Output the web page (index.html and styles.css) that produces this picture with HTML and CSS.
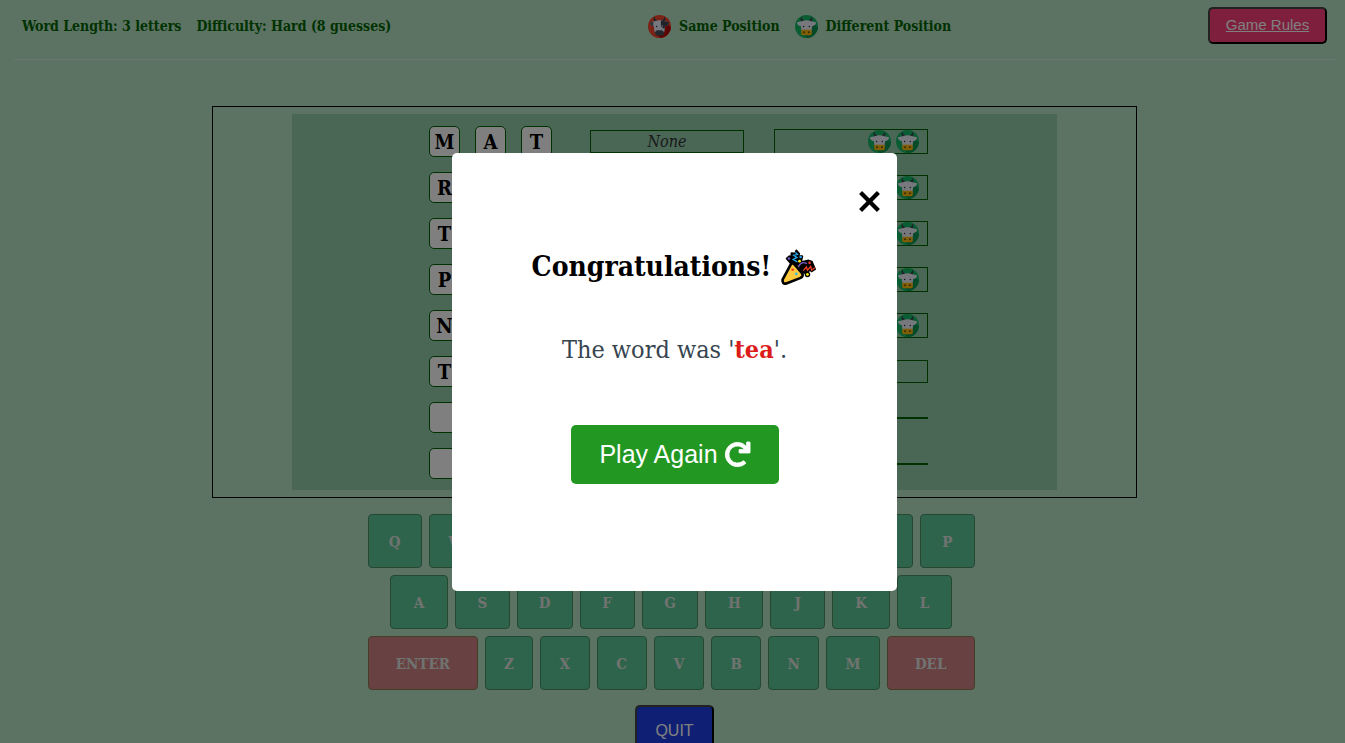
FILE: index.html
```
<!DOCTYPE html>
<html lang="en">
<head>
<meta charset="utf-8">
<meta name="viewport" content="width=device-width, initial-scale=1">
<title>Word Game</title>
<link rel="stylesheet" href="styles.css">
</head>
<body>
<svg class="defs" aria-hidden="true">
  <symbol id="head" viewBox="0 0 24 24">
    <path d="M7.500 8Q4.800 5 6.500 1.500Q7 4.500 10 6zM16.500 8Q19.200 5 17.500 1.500Q17 4.500 14 6z" fill="#3d4550"/>
    <path d="M7 6.500Q12 4.500 17 6.500L22 7.500Q21.500 11.500 18 11.500L17 18H7L6 11.500Q2.500 11.500 2 7.500z" fill="#eef0fa"/>
  </symbol>
  <symbol id="cow" viewBox="0 0 24 24">
    <circle cx="12" cy="12" r="12" fill="#14b866"/>
    <path d="M17 7L24 13A12 12 0 0 1 13 24L8 19z" fill="#0d9454"/>
    <use href="#head"/>
    <rect x="6.500" y="15.500" width="11" height="5.500" rx="1.500" fill="#ffbd0a"/>
    <circle cx="9.500" cy="18" r="1" fill="#6b5200"/><circle cx="14.500" cy="18" r="1" fill="#6b5200"/>
    <circle cx="9" cy="12" r=".8" fill="#333"/><circle cx="15" cy="12" r=".8" fill="#333"/>
  </symbol>
  <symbol id="bull" viewBox="0 0 24 24">
    <circle cx="12" cy="12" r="12" fill="#f5472f"/>
    <path d="M19 7L24 13A12 12 0 0 1 13 24L8 19z" fill="#b80b0b"/>
    <use href="#head"/>
    <path d="M13.500 5.700L17 6.500L22 7.500Q21.500 11.500 18 11.500L17 14.500L13.500 12z" fill="#3d4652"/>
    <path d="M2 7.500L5.500 7V11.500Q2.500 11.500 2 7.500z" fill="#5b6470"/>
    <rect x="7.500" y="16" width="9" height="5.500" rx="2.700" fill="#46505c"/>
    <circle cx="9" cy="12" r=".8" fill="#333"/><circle cx="15" cy="11.500" r=".8" fill="#eee"/>
  </symbol>
</svg>

<div class="page">
  <header class="topbar">
    <div class="group"><span>Word Length: 3 letters</span><span>Difficulty: Hard (8 guesses)</span></div>
    <div class="group">
      <span class="legend"><svg class="badge"><use href="#bull"/></svg>Same Position</span>
      <span class="legend"><svg class="badge"><use href="#cow"/></svg>Different Position</span>
    </div>
    <button class="rules" type="button">Game Rules</button>
  </header>

  <main>
    <section class="board">
      <div class="guesses">
        <div class="guess"><div class="tiles"><span class="tile">M</span><span class="tile">A</span><span class="tile">T</span></div><div class="hint none">None</div><div class="hint"><svg class="badge"><use href="#cow"/></svg><svg class="badge"><use href="#cow"/></svg></div></div>
        <div class="guess"><div class="tiles"><span class="tile">R</span><span class="tile"></span><span class="tile"></span></div><div class="hint none"></div><div class="hint"><svg class="badge"><use href="#cow"/></svg></div></div>
        <div class="guess"><div class="tiles"><span class="tile">T</span><span class="tile"></span><span class="tile"></span></div><div class="hint none"></div><div class="hint"><svg class="badge"><use href="#cow"/></svg></div></div>
        <div class="guess"><div class="tiles"><span class="tile">P</span><span class="tile"></span><span class="tile"></span></div><div class="hint none"></div><div class="hint"><svg class="badge"><use href="#cow"/></svg></div></div>
        <div class="guess"><div class="tiles"><span class="tile">N</span><span class="tile"></span><span class="tile"></span></div><div class="hint none"></div><div class="hint"><svg class="badge"><use href="#cow"/></svg></div></div>
        <div class="guess"><div class="tiles"><span class="tile">T</span><span class="tile">E</span><span class="tile">A</span></div><div class="hint"></div><div class="hint none">None</div></div>
        <div class="guess"><div class="tiles"><span class="tile"></span><span class="tile"></span><span class="tile"></span></div><div class="hint empty"></div><div class="hint empty"></div></div>
        <div class="guess"><div class="tiles"><span class="tile"></span><span class="tile"></span><span class="tile"></span></div><div class="hint empty"></div><div class="hint empty"></div></div>
      </div>
    </section>

    <section class="keyboard" aria-label="Keyboard">
      <div class="keys keys-top"><button class="key">Q</button><button class="key">W</button><button class="key">E</button><button class="key">R</button><button class="key">T</button><button class="key">Y</button><button class="key">U</button><button class="key">I</button><button class="key">O</button><button class="key">P</button></div>
      <div class="keys keys-middle"><button class="key">A</button><button class="key">S</button><button class="key">D</button><button class="key">F</button><button class="key">G</button><button class="key">H</button><button class="key">J</button><button class="key">K</button><button class="key">L</button></div>
      <div class="keys keys-bottom"><button class="key action">ENTER</button><button class="key">Z</button><button class="key">X</button><button class="key">C</button><button class="key">V</button><button class="key">B</button><button class="key">N</button><button class="key">M</button><button class="key action">DEL</button></div>
    </section>
    <button class="quit" type="button">QUIT</button>
  </main>
</div>

<div class="overlay">
  <div class="modal" role="dialog" aria-modal="true" aria-labelledby="result">
    <button class="close" type="button" aria-label="Close"><svg viewBox="0 0 20 20"><path d="M1.500 1.500L18.500 18.500M18.500 1.500L1.500 18.500" stroke="#000" stroke-width="4"/></svg></button>
    <h1 class="title" id="result">Congratulations!
      <svg class="party" viewBox="0 0 34 34" aria-hidden="true">
        <g stroke="#000" stroke-linejoin="round" stroke-linecap="round">
          <path d="M9 13L5.500 9L8 7L10 8L10 4L13.500 4.500L14.500 1.500L17 4.500L16 7L20 7L19 11L15 15zM17 15L21 12L26 11L29 12L32 19L29 21L27 19L25 23L20 22z" fill="#000" stroke-width="2"/>
          <path d="M9.500 14Q11.500 12.500 14 16L20 23Q21.500 26 18 27.500L5 32.500Q1.200 33.500 1.500 29z" fill="#ffc83d" stroke-width="2.500"/>
        </g>
        <g fill="none" stroke-width="1.300" stroke-linecap="round">
          <path d="M14 3.500L15.500 5L12 6L15 8L11.500 10L15 12" stroke="#26a6e8"/>
          <path d="M17 16Q19 11.500 24 13.500" stroke="#7a5ac8"/>
          <path d="M21.500 20L24 17L25 20L28 16.500L29 20L31.500 18" stroke="#ef3e23"/>
        </g>
        <circle cx="7.500" cy="9" r="1.200" fill="#7a5ac8"/><circle cx="18.500" cy="7.500" r="1.200" fill="#26a6e8"/><circle cx="17.500" cy="11.500" r="1.300" fill="#fff100"/><circle cx="27" cy="13" r="1.300" fill="#ef3e23"/><circle cx="25" cy="24" r="2.600"/><circle cx="25" cy="24" r="1.300" fill="#fff100"/>
        <circle cx="11" cy="19.500" r="1.200" fill="#ef3e23"/><circle cx="14.500" cy="23.500" r="1.200" fill="#26bce8"/>
      </svg>
    </h1>
    <p class="answer">The word was '<strong>tea</strong>'.</p>
    <button class="again" type="button">Play Again
      <svg viewBox="0 0 512 512" aria-hidden="true"><path fill="currentColor" stroke="currentColor" stroke-width="18" d="M500.330 0h-47.410a12 12 0 0 0-12 12.570l4 82.760A247.420 247.420 0 0 0 256 8C119.340 8 7.900 119.530 8 256.190 8.100 393.070 119.100 504 256 504a247.100 247.100 0 0 0 166.180-63.910 12 12 0 0 0 .48-17.430l-34-34a12 12 0 0 0-16.380-.55A176 176 0 1 1 402.100 157.800l-101.530-4.870a12 12 0 0 0-12.570 12v47.410a12 12 0 0 0 12 12h200.330a12 12 0 0 0 12-12V12a12 12 0 0 0-12-12z"/></svg>
    </button>
  </div>
</div>
</body>
</html>
```

FILE: styles.css
```
* { box-sizing: border-box; }
:root { --slab: "DejaVu Serif Condensed", "DejaVu Serif", serif; --sans: "Liberation Sans", Arial, sans-serif; }
body { margin: 0; height: 100vh; overflow: hidden; background: #b8e6c6; font-family: var(--slab); }
button { font-family: inherit; margin: 0; padding: 0; cursor: pointer; }
.defs { position: absolute; width: 0; height: 0; }
.page { padding: 7px 10px 0 14px; }

.topbar { display: flex; justify-content: space-between; align-items: flex-start; height: 53px; padding: 0 8px; border-bottom: 1px solid #d2eedb; color: #006400; font-size: 14px; font-weight: bold; white-space: nowrap; }
.group { display: flex; gap: 15px; line-height: 38px; }
.legend { display: flex; align-items: center; gap: 8px; }
.badge { width: 23px; height: 23px; flex: none; }
.rules { width: 119px; height: 37px; padding-bottom: 2px; background: #ff3f7c; color: #fff; border: 2px solid; border-color: #444 #000 #000 #444; border-radius: 5px; font: 15px var(--sans); text-decoration: underline; }

main { display: flex; flex-direction: column; align-items: center; }
.board { width: 70%; margin-top: 46px; padding: 7px 0; border: 1px solid #000; }
.guesses { width: 83%; margin: 0 auto; padding: 12px 0 11px 8px; display: flex; flex-direction: column; align-items: center; gap: 15px; background: #94cead; }
.guess { display: flex; align-items: center; }
.tiles { display: flex; gap: 15px; margin-right: 38px; }
.tile { display: grid; place-items: center; width: 31px; height: 31px; background: #fff; border: 1px solid #006400; border-radius: 5px; font-size: 20px; font-weight: bold; }
.hint { display: flex; justify-content: flex-end; gap: 5px; width: 154px; min-height: 23px; padding: 0 8px; border: 1px solid #006400; }
.hint + .hint { margin-left: 30px; }
.none { justify-content: center; font-size: 16px; line-height: 21px; font-style: italic; color: #333; }
.empty { min-height: 2px; }

.keyboard { width: 607px; max-width: 100%; margin: 16px 7px 0 0; display: flex; flex-direction: column; align-items: center; gap: 7px; }
.keys { display: grid; gap: 7px; width: 100%; }
.keys-top { grid-template-columns: repeat(10, 1fr); }
.keys-middle { width: 562px; grid-template-columns: 58fr 55fr 56fr 55fr 57fr 58fr 55fr 58fr 55fr; }
.keys-bottom { grid-template-columns: 111fr 48fr 50fr 50fr 51fr 50fr 51fr 54fr 88fr; }
.key { height: 54px; padding-top: 2px; background: #5cc896; border: 1px solid #4a9060; border-radius: 4px; color: #e0e6e0; font-size: 15px; font-weight: bold; }
.action { background: #d08484; border-color: #8a7a50; }
.quit { width: 79px; height: 51px; margin-top: 15px; background: #1e3ee8; color: #fff; border: 2px solid; border-color: #444 #000 #000 #444; border-radius: 5px; font: 16px var(--sans); }

.overlay { position: fixed; inset: 0; display: grid; place-items: center; padding-left: 4px; background: rgba(0, 0, 0, .5); }
.modal { position: relative; width: 33.1vw; min-width: 320px; display: flex; flex-direction: column; align-items: center; padding: 93px 0 107px; background: #fff; border-radius: 5px; }
.close { position: absolute; top: 38px; right: 17px; width: 21px; height: 21px; border: 0; background: none; }
.close svg { display: block; width: 100%; height: 100%; }
.title { margin: 0; display: flex; align-items: center; gap: 10px; font-size: 28px; line-height: 42px; }
.party { width: 36px; height: 36px; }
.answer { margin: 43px 0 57px; font-size: 25px; line-height: 37px; color: #36454f; }
.answer strong { color: #dc1c1c; }
.again { display: flex; align-items: center; justify-content: center; gap: 7px; width: 208px; height: 59px; border: 0; border-radius: 5px; background: #229822; color: #fff; font: 25px var(--sans); }
.again svg { width: 25px; height: 25px; overflow: visible; }
```
